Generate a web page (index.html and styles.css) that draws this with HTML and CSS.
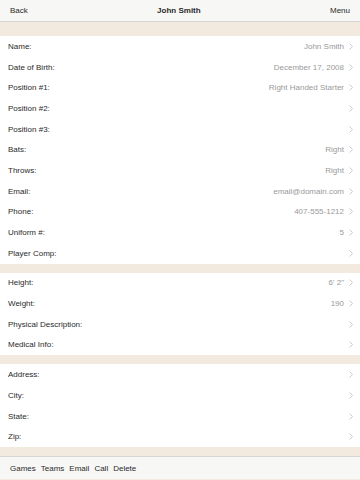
FILE: index.html
```html
<!DOCTYPE html>
<html>
<head>
  <title>John Smith</title>
  <link rel="stylesheet" href="styles.css">
</head>
<body>

  <!-- Top bar -->
  <div class="navbar">
    <span class="nav-btn">Back</span>
    <span class="nav-title">John Smith</span>
    <span class="nav-btn">Menu</span>
  </div>

  <div class="spacer"></div>

  <!-- Player info -->
  <div class="group">
    <div class="row"><span class="label">Name:</span><span class="value">John Smith</span><svg class="chev" viewBox="0 0 4 7"><polyline points="0.5,0.5 3.5,3.5 0.5,6.5"/></svg></div>
    <div class="row"><span class="label">Date of Birth:</span><span class="value">December 17, 2008</span><svg class="chev" viewBox="0 0 4 7"><polyline points="0.5,0.5 3.5,3.5 0.5,6.5"/></svg></div>
    <div class="row"><span class="label">Position #1:</span><span class="value">Right Handed Starter</span><svg class="chev" viewBox="0 0 4 7"><polyline points="0.5,0.5 3.5,3.5 0.5,6.5"/></svg></div>
    <div class="row"><span class="label">Position #2:</span><span class="value"></span><svg class="chev" viewBox="0 0 4 7"><polyline points="0.5,0.5 3.5,3.5 0.5,6.5"/></svg></div>
    <div class="row"><span class="label">Position #3:</span><span class="value"></span><svg class="chev" viewBox="0 0 4 7"><polyline points="0.5,0.5 3.5,3.5 0.5,6.5"/></svg></div>
    <div class="row"><span class="label">Bats:</span><span class="value">Right</span><svg class="chev" viewBox="0 0 4 7"><polyline points="0.5,0.5 3.5,3.5 0.5,6.5"/></svg></div>
    <div class="row"><span class="label">Throws:</span><span class="value">Right</span><svg class="chev" viewBox="0 0 4 7"><polyline points="0.5,0.5 3.5,3.5 0.5,6.5"/></svg></div>
    <div class="row"><span class="label">Email:</span><span class="value">email@domain.com</span><svg class="chev" viewBox="0 0 4 7"><polyline points="0.5,0.5 3.5,3.5 0.5,6.5"/></svg></div>
    <div class="row"><span class="label">Phone:</span><span class="value">407-555-1212</span><svg class="chev" viewBox="0 0 4 7"><polyline points="0.5,0.5 3.5,3.5 0.5,6.5"/></svg></div>
    <div class="row"><span class="label">Uniform #:</span><span class="value">5</span><svg class="chev" viewBox="0 0 4 7"><polyline points="0.5,0.5 3.5,3.5 0.5,6.5"/></svg></div>
    <div class="row"><span class="label">Player Comp:</span><span class="value"></span><svg class="chev" viewBox="0 0 4 7"><polyline points="0.5,0.5 3.5,3.5 0.5,6.5"/></svg></div>
  </div>

  <div class="gap"></div>

  <!-- Physical -->
  <div class="group">
    <div class="row"><span class="label">Height:</span><span class="value">6' 2"</span><svg class="chev" viewBox="0 0 4 7"><polyline points="0.5,0.5 3.5,3.5 0.5,6.5"/></svg></div>
    <div class="row"><span class="label">Weight:</span><span class="value">190</span><svg class="chev" viewBox="0 0 4 7"><polyline points="0.5,0.5 3.5,3.5 0.5,6.5"/></svg></div>
    <div class="row"><span class="label">Physical Description:</span><span class="value"></span><svg class="chev" viewBox="0 0 4 7"><polyline points="0.5,0.5 3.5,3.5 0.5,6.5"/></svg></div>
    <div class="row"><span class="label">Medical Info:</span><span class="value"></span><svg class="chev" viewBox="0 0 4 7"><polyline points="0.5,0.5 3.5,3.5 0.5,6.5"/></svg></div>
  </div>

  <div class="gap"></div>

  <!-- Address -->
  <div class="group">
    <div class="row"><span class="label">Address:</span><span class="value"></span><svg class="chev" viewBox="0 0 4 7"><polyline points="0.5,0.5 3.5,3.5 0.5,6.5"/></svg></div>
    <div class="row"><span class="label">City:</span><span class="value"></span><svg class="chev" viewBox="0 0 4 7"><polyline points="0.5,0.5 3.5,3.5 0.5,6.5"/></svg></div>
    <div class="row"><span class="label">State:</span><span class="value"></span><svg class="chev" viewBox="0 0 4 7"><polyline points="0.5,0.5 3.5,3.5 0.5,6.5"/></svg></div>
    <div class="row"><span class="label">Zip:</span><span class="value"></span><svg class="chev" viewBox="0 0 4 7"><polyline points="0.5,0.5 3.5,3.5 0.5,6.5"/></svg></div>
  </div>

  <div class="gap"></div>

  <!-- Bottom toolbar -->
  <div class="toolbar">
    <span class="tool">Games</span>
    <span class="tool">Teams</span>
    <span class="tool">Email</span>
    <span class="tool">Call</span>
    <span class="tool">Delete</span>
  </div>

</body>
</html>
```

FILE: styles.css
```css
body {
  margin: 0;
  background-color: #f2e9df;
  font-family: "Liberation Sans", Arial, sans-serif;
  font-size: 8px;
  color: #2a2a2a;
  overflow: hidden;
}

.navbar {
  display: flex;
  justify-content: space-between;
  align-items: center;
  height: 21px;
  padding: 0 10px;
  background: #f7f7f5;
  border-bottom: 1px solid #d6d6d4;
}

.nav-title {
  font-weight: bold;
}

.spacer {
  height: 14px;
}

.group {
  background: #fff;
}

.row {
  display: flex;
  align-items: center;
  height: 20.7px;
  padding: 0 7px 0 8px;
}

.label {
  flex: 1;
}

.value {
  color: #9a9a9a;
}

/* disclosure arrow */
.chev {
  width: 4px;
  height: 7px;
  margin-left: 5px;
  fill: none;
  stroke: #bdbdbd;
  stroke-width: 0.8;
}

.gap {
  height: 9px;
}

.toolbar {
  display: flex;
  gap: 5px;
  align-items: center;
  height: 22px;
  padding: 0 10px;
  background: #f7f7f5;
  border-top: 1px solid #d6d6d4;
}
```
